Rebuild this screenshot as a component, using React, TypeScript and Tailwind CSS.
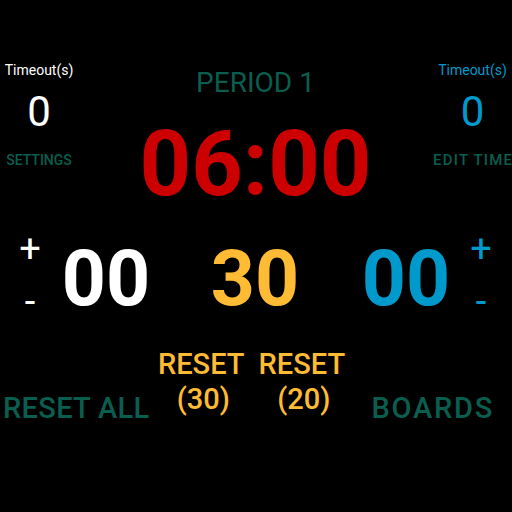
import React from "react";

const GREEN = "text-[#0a5e4f]";

export default function App() {
  return (
    <div
      className="w-[512px] h-[512px] bg-black overflow-hidden flex flex-col"
      style={{ fontFamily: "Roboto, 'Noto Sans', sans-serif" }}
    >
      {/* top section */}
      <div className="flex flex-row items-start">
        <div className="ml-[5px] w-[68px] pt-[63px] flex flex-col items-center">
          <div className="text-[14px] leading-[14px] text-white whitespace-nowrap">Timeout(s)</div>
          <div className="mt-[14px] text-[42px] leading-[42px] text-white">0</div>
          <div className={`mt-[20px] text-[14px] leading-[15px] font-medium whitespace-nowrap ${GREEN}`}>SETTINGS</div>
        </div>
        <div className="flex-1 pt-[69px] flex flex-col items-center">
          <div className={`text-[28px] leading-[28px] whitespace-nowrap ${GREEN}`}>PERIOD 1</div>
          <div className="mt-[23px] text-[90px] leading-[90px] font-bold text-[#cc0000] whitespace-nowrap">06:00</div>
        </div>
        <div className="mr-[5px] w-[69px] pt-[63px] flex flex-col items-center">
          <div className="text-[14px] leading-[14px] text-[#0099cc] whitespace-nowrap">Timeout(s)</div>
          <div className="mt-[14px] text-[42px] leading-[42px] text-[#0099cc]">0</div>
          <div className={`mt-[20px] self-start -ml-[5px] text-[15px] leading-[15px] font-medium tracking-[1.2px] whitespace-nowrap ${GREEN}`}>EDIT TIME</div>
        </div>
      </div>

      {/* score row */}
      <div className="mt-[31px] flex flex-row items-start pl-[10px]">
        <div className="w-[40px] h-[77px] flex flex-col items-center text-white text-[38px] leading-none">
          <div className="-mt-[11px]">+</div>
          <div className="mt-[14px]">-</div>
        </div>
        <div className="ml-[6px] w-[100px] text-center text-[77px] leading-[77px] font-bold text-white">00</div>
        <div className="ml-[49px] w-[100px] text-center text-[77px] leading-[77px] font-bold text-[#ffbb33]">30</div>
        <div className="ml-[51px] w-[100px] text-center text-[77px] leading-[77px] font-bold text-[#0099cc]">00</div>
        <div className="ml-[5px] w-[40px] h-[77px] flex flex-col items-center text-[#0099cc] text-[38px] leading-none">
          <div className="-mt-[11px]">+</div>
          <div className="mt-[14px]">-</div>
        </div>
      </div>

      {/* bottom row */}
      <div className="mt-[29px] flex flex-row items-start">
        <div className={`mt-[47px] w-[153px] text-center text-[29px] leading-[28px] font-medium tracking-[0.3px] whitespace-nowrap ${GREEN}`}>RESET ALL</div>
        <div className="w-[98px] text-center text-[29px] leading-[35px] font-medium text-[#ffbb33] whitespace-nowrap">
          <div>RESET</div>
          <div className="pl-[4px]">(30)</div>
        </div>
        <div className="w-[104px] text-center text-[29px] leading-[35px] font-medium text-[#ffbb33] whitespace-nowrap">
          <div>RESET</div>
          <div className="pl-[4px]">(20)</div>
        </div>
        <div className={`mt-[47px] w-[159px] text-center text-[29px] leading-[28px] font-medium tracking-[1.8px] whitespace-nowrap ${GREEN}`}>BOARDS</div>
      </div>
    </div>
  );
}
